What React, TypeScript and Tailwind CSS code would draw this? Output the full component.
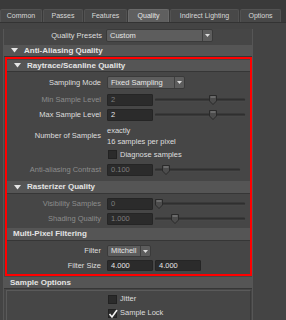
import React from "react";

const font = { fontFamily: '"Liberation Sans", Arial, sans-serif' };

function Tri() {
  return (
    <svg width="7" height="5" viewBox="0 0 7 5" className="shrink-0">
      <path d="M0 0 H7 L3.5 4.5 Z" fill="#e6e6e6" />
    </svg>
  );
}

function Header({ title, tri = true, cls = "" }: { title: string; tri?: boolean; cls?: string }) {
  return (
    <div className={`flex items-center bg-[#555555] border-b border-[#363636] text-[8px] font-bold text-[#e4e4e4] ${cls}`}>
      {tri ? (
        <div className="w-[20px] flex justify-center">
          <Tri />
        </div>
      ) : (
        <div className="w-[6px]" />
      )}
      <span>{title}</span>
    </div>
  );
}

function Label({ text, dim = false, w = 97 }: { text: string; dim?: boolean; w?: number }) {
  return (
    <div
      className={`shrink-0 text-right pr-[3px] text-[7.5px] ${dim ? "text-[#8c8c8c]" : "text-[#dedede]"}`}
      style={{ width: w }}
    >
      {text}
    </div>
  );
}

function Field({ value, dim = false, w = 46 }: { value: string; dim?: boolean; w?: number }) {
  return (
    <div
      className={`h-full bg-[#2b2b2b] border border-[#252525] rounded-[1px] flex items-center pl-[3px] text-[7.5px] ${dim ? "text-[#7d7d7d]" : "text-[#e6e6e6]"}`}
      style={{ width: w }}
    >
      {value}
    </div>
  );
}

function Drop({ value, w }: { value: string; w: number }) {
  return (
    <div
      className="h-full bg-[#5d5d5d] border border-[#3a3a3a] rounded-[2px] flex items-center text-[7.5px] text-[#e6e6e6]"
      style={{ width: w }}
    >
      <span className="flex-1 pl-[3px]">{value}</span>
      <div className="w-[10px] h-full border-l border-[#3f3f3f] flex items-center justify-center">
        <svg width="5" height="3" viewBox="0 0 5 3">
          <path d="M0 0 H5 L2.5 3 Z" fill="#dcdcdc" />
        </svg>
      </div>
    </div>
  );
}

function Slider({ pos, len = 90 }: { pos: number; len?: number }) {
  return (
    <div className="relative h-full ml-[2px]" style={{ width: len }}>
      <div className="absolute left-0 right-0 top-1/2 -translate-y-1/2 h-[3px] bg-[#2f2f2f] border-b border-[#5a5a5a] rounded-[1px]" />
      <svg
        width="8"
        height="10"
        viewBox="0 0 8 10"
        className="absolute top-1/2 -translate-y-1/2"
        style={{ left: pos - 4 }}
      >
        <path d="M0.5 0.5 H7.5 V6 L4 9.5 L0.5 6 Z" fill="#4c4c4c" stroke="#2a2a2a" />
        <path d="M1.5 1.5 H6.5 V2.5 H1.5 Z" fill="#8a8a8a" />
      </svg>
    </div>
  );
}

function Check({ checked = false }: { checked?: boolean }) {
  return (
    <div className="w-[9px] h-[9px] bg-[#2b2b2b] border border-[#222] relative shrink-0">
      {checked && (
        <svg width="10" height="10" viewBox="0 0 10 10" className="absolute -left-[1px] -top-[1px]">
          <path d="M1.5 5 L4 8 L9 1" fill="none" stroke="#f2f2f2" strokeWidth="1.6" />
        </svg>
      )}
    </div>
  );
}

const tabs = [
  { t: "Common", w: 42 },
  { t: "Passes", w: 40 },
  { t: "Features", w: 43 },
  { t: "Quality", w: 41, active: true },
  { t: "Indirect Lighting", w: 69 },
  { t: "Options", w: 41 },
];

export default function App() {
  return (
    <div className="w-[286px] h-[320px] bg-[#444444] overflow-hidden" style={font}>
      {/* tab bar */}
      <div className="h-[23px] bg-[#3a3a3a] pt-[9px] flex items-start border-b border-[#333]">
        {tabs.map((tb) => (
          <div
            key={tb.t}
            className={`h-[13px] mr-[1px] flex items-center justify-center text-[7px] rounded-t-[2px] border border-b-0 ${
              tb.active
                ? "bg-[#5f5f5f] border-[#6a6a6a] text-[#e6e6e6]"
                : "bg-[#484848] border-[#525252] text-[#d8d8d8]"
            }`}
            style={{ width: tb.w }}
          >
            {tb.t}
          </div>
        ))}
      </div>

      <div className="ml-[3px] w-[250px] h-[297px] border-l border-r border-[#565656] bg-[#464646]">
        {/* presets */}
        <div className="mt-[6px] h-[13px] flex items-center">
          <Label text="Quality Presets" w={101} />
          <div className="h-full ml-[1px]">
            <Drop value="Custom" w={107} />
          </div>
        </div>

        <Header title="Anti-Aliasing Quality" cls="mt-[3px] h-[12px]" />

        {/* red box */}
        <div className="ml-[1px] w-[247px] h-[219px] border-2 border-[#ff0000]">
          <Header title="Raytrace/Scanline Quality" cls="mt-[1px] h-[12px]" />

          <div className="mt-[4px] h-[13px] flex items-center">
            <Label text="Sampling Mode" />
            <div className="h-full ml-[3px]">
              <Drop value="Fixed Sampling" w={78} />
            </div>
          </div>

          <div className="mt-[5px] h-[12px] flex items-center">
            <Label text="Min Sample Level" dim />
            <div className="h-full ml-[3px] flex">
              <Field value="2" dim />
              <Slider pos={58} />
            </div>
          </div>

          <div className="mt-[3px] h-[12px] flex items-center">
            <Label text="Max Sample Level" />
            <div className="h-full ml-[3px] flex">
              <Field value="2" />
              <Slider pos={58} />
            </div>
          </div>

          <div className="mt-[4px] h-[22px] flex items-center">
            <Label text="Number of Samples" />
            <div className="ml-[3px] text-[7.5px] text-[#dedede] leading-[11px]">
              <div>exactly</div>
              <div>16 samples per pixel</div>
            </div>
          </div>

          <div className="mt-[2px] h-[11px] flex items-center">
            <div className="w-[101px]" />
            <Check />
            <span className="ml-[3px] text-[7.5px] text-[#dedede]">Diagnose samples</span>
          </div>

          <div className="mt-[4px] h-[12px] flex items-center">
            <Label text="Anti-aliasing Contrast" dim />
            <div className="h-full ml-[3px] flex">
              <Field value="0.100" dim />
              <Slider pos={11} len={85} />
            </div>
          </div>

          <Header title="Rasterizer Quality" cls="mt-[5px] h-[13px]" />

          <div className="mt-[4px] h-[12px] flex items-center">
            <Label text="Visibility Samples" dim />
            <div className="h-full ml-[3px] flex">
              <Field value="0" dim />
              <Slider pos={4} />
            </div>
          </div>

          <div className="mt-[3px] h-[12px] flex items-center">
            <Label text="Shading Quality" dim />
            <div className="h-full ml-[3px] flex">
              <Field value="1.000" dim />
              <Slider pos={20} />
            </div>
          </div>

          <Header title="Multi-Pixel Filtering" tri={false} cls="mt-[3px] h-[13px]" />

          <div className="mt-[4px] h-[12px] flex items-center">
            <Label text="Filter" />
            <div className="h-full ml-[3px]">
              <Drop value="Mitchell" w={44} />
            </div>
          </div>

          <div className="mt-[3px] h-[11px] flex items-center">
            <Label text="Filter Size" />
            <div className="h-full ml-[3px] flex gap-[2px]">
              <Field value="4.000" />
              <Field value="4.000" />
            </div>
          </div>
        </div>

        <Header title="Sample Options" tri={false} cls="mt-[1px] h-[12px]" />

        <div className="ml-[2px] w-[245px] h-[40px] mt-[1px] border border-[#5a5a5a] border-r-[#3a3a3a] pt-[3px]">
          <div className="h-[10px] flex items-center">
            <div className="w-[101px]" />
            <Check />
            <span className="ml-[3px] text-[7.5px] text-[#dedede]">Jitter</span>
          </div>
          <div className="mt-[4px] h-[10px] flex items-center">
            <div className="w-[101px]" />
            <Check checked />
            <span className="ml-[3px] text-[7.5px] text-[#dedede]">Sample Lock</span>
          </div>
        </div>
      </div>
    </div>
  );
}
